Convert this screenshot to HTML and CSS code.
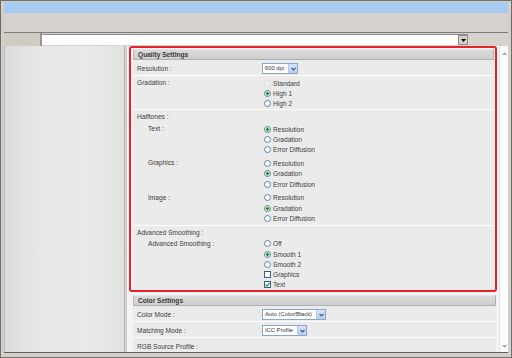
FILE: index.html
```html
<!DOCTYPE html>
<html>
<head>
<meta charset="utf-8">
<link rel="stylesheet" href="styles.css">
</head>
<body>
<div class="window">
  <div class="titlebar"></div>
  <div class="toolbar"></div>
  <div class="addressbar">
    <div class="addr-label"></div>
    <div class="addr-input">
      <span class="addr-drop"><svg width="5" height="3" viewBox="0 0 5 3"><path d="M0 0h5L2.5 3z" fill="#000"/></svg></span>
    </div>
    <div class="addr-rest"></div>
  </div>
  <div class="content">
    <div class="sidebar"></div>
    <div class="divider"></div>
    <div class="main">
      <div class="highlight">
        <section class="panel">
          <div class="panel-head">Quality Settings</div>
          <div class="row row-select">
            <div class="label">Resolution :</div>
            <div class="ctrl"><span class="select">600 dpi<span class="sel-btn"><svg width="5" height="4" viewBox="0 0 5 4"><path d="M0.5 0.8L2.5 2.8L4.5 0.8" fill="none" stroke="#3f5478" stroke-width="1.2"/></svg></span></span></div>
          </div>
          <div class="row row-radios">
            <div class="label">Gradation :</div>
            <div class="ctrl opts">
              <div class="opt"><span class="radio disabled"></span>Standard</div>
              <div class="opt"><span class="radio on"></span>High 1</div>
              <div class="opt"><span class="radio"></span>High 2</div>
            </div>
          </div>
          <div class="row row-group">
            <div class="label full">Halftones :</div>
            <div class="sub">
              <div class="label sublabel">Text :</div>
              <div class="ctrl opts">
                <div class="opt"><span class="radio on"></span>Resolution</div>
                <div class="opt"><span class="radio"></span>Gradation</div>
                <div class="opt"><span class="radio"></span>Error Diffusion</div>
              </div>
            </div>
            <div class="sub">
              <div class="label sublabel">Graphics :</div>
              <div class="ctrl opts">
                <div class="opt"><span class="radio"></span>Resolution</div>
                <div class="opt"><span class="radio on"></span>Gradation</div>
                <div class="opt"><span class="radio"></span>Error Diffusion</div>
              </div>
            </div>
            <div class="sub">
              <div class="label sublabel">Image :</div>
              <div class="ctrl opts">
                <div class="opt"><span class="radio"></span>Resolution</div>
                <div class="opt"><span class="radio on"></span>Gradation</div>
                <div class="opt"><span class="radio"></span>Error Diffusion</div>
              </div>
            </div>
          </div>
          <div class="row row-group row-last">
            <div class="label full">Advanced Smoothing :</div>
            <div class="sub">
              <div class="label sublabel">Advanced Smoothing :</div>
              <div class="ctrl opts">
                <div class="opt"><span class="radio"></span>Off</div>
                <div class="opt"><span class="radio on"></span>Smooth 1</div>
                <div class="opt"><span class="radio"></span>Smooth 2</div>
                <div class="opt"><span class="check"></span>Graphics</div>
                <div class="opt"><span class="check on"><svg width="7" height="7" viewBox="0 0 7 7"><path d="M1.5 3.6L2.9 5L5.6 1.8" fill="none" stroke="#23a023" stroke-width="1.2"/></svg></span>Text</div>
              </div>
            </div>
          </div>
        </section>
      </div>
      <section class="panel panel-plain">
        <div class="panel-head">Color Settings</div>
        <div class="row row-select">
          <div class="label">Color Mode :</div>
          <div class="ctrl"><span class="select">Auto (Color/Black)<span class="sel-btn"><svg width="5" height="4" viewBox="0 0 5 4"><path d="M0.5 0.8L2.5 2.8L4.5 0.8" fill="none" stroke="#3f5478" stroke-width="1.2"/></svg></span></span></div>
        </div>
        <div class="row row-select">
          <div class="label">Matching Mode :</div>
          <div class="ctrl"><span class="select">ICC Profile<span class="sel-btn"><svg width="5" height="4" viewBox="0 0 5 4"><path d="M0.5 0.8L2.5 2.8L4.5 0.8" fill="none" stroke="#3f5478" stroke-width="1.2"/></svg></span></span></div>
        </div>
        <div class="row row-select">
          <div class="label">RGB Source Profile :</div>
        </div>
      </section>
    </div>
    <div class="scrollbar">
      <svg class="arrow" width="5" height="3" viewBox="0 0 5 3"><path d="M0 3L2.5 0L5 3z" fill="#a8a8a8"/></svg>
      <svg class="arrow" width="5" height="3" viewBox="0 0 5 3"><path d="M0 0L2.5 3L5 0z" fill="#a8a8a8"/></svg>
    </div>
  </div>
  <div class="statusbar"></div>
</div>
</body>
</html>
```

FILE: styles.css
```css
html, body {
  margin: 0;
  padding: 0;
}
body {
  width: 512px;
  height: 358px;
  overflow: hidden;
  font-family: "Liberation Sans", Arial, sans-serif;
  font-size: 6.6px;
  color: #3c3c3c;
}
.window {
  box-sizing: border-box;
  width: 512px;
  height: 358px;
  border: 1px solid #6e6e6e;
  background: #d4d0c8;
  padding: 1px 3px 0 3px;
  display: flex;
  flex-direction: column;
}
.titlebar {
  height: 11px;
  background: #a8c9f1;
  flex: none;
}
.toolbar {
  height: 19px;
  background: #d6d3ce;
  flex: none;
}
.addressbar {
  height: 13px;
  border-top: 1px solid #7c7c7c;
  display: flex;
  flex: none;
  background: #d6d3ce;
}
.addr-label {
  width: 36px;
  border-right: 2px solid #9a978f;
  background: #d0ccc4;
}
.addr-input {
  width: 426px;
  margin-top: 1px;
  height: 11px;
  background: #fff;
  border-top: 1px solid #8a8a8a;
  box-sizing: border-box;
  display: flex;
  justify-content: flex-end;
}
.addr-drop {
  width: 10px;
  height: 10px;
  background: #d4d0c8;
  border: 1px solid #8e8e8e;
  box-sizing: border-box;
  display: flex;
  align-items: center;
  justify-content: center;
}
.addr-rest {
  flex: 1;
}
.content {
  height: 306px;
  display: flex;
  flex: none;
}
.sidebar {
  width: 119px;
  border-left: 1px solid #b9b9b9;
  background: linear-gradient(to right, #dcdcdc, #e7e7e7 30%, #eaeaea 70%, #e2e2e2);
}
.divider {
  width: 3px;
  border-left: 1px solid #b4b4b4;
  background: #d4d0c8;
  box-sizing: border-box;
}
.main {
  width: 372px;
  background: #f3f3f3;
  padding-left: 2px;
  box-sizing: border-box;
  overflow: hidden;
}
.highlight {
  border: 2px solid #e4212d;
  border-radius: 3px;
  padding: 1px 1px 0 2px;
  width: 368px;
  box-sizing: border-box;
}
.panel-plain {
  margin: 3px 3px 0 4px;
}
.panel-head {
  height: 11px;
  box-sizing: border-box;
  background: linear-gradient(#dadada, #cfcfcf);
  border: 1px solid #b0b0b0;
  border-top-color: #e6e6e6;
  border-left-color: #bdbdbd;
  font-weight: bold;
  line-height: 9px;
  padding-left: 4px;
  color: #3a3a3a;
}
.row {
  display: grid;
  grid-template-columns: 125px 1fr;
  padding: 1px 0 1px 4px;
  background: #ebebeb;
  border-bottom: 1px solid #ffffff;
}
.row-radios {
  padding: 2px 0 0 4px;
}
.row-select {
  padding: 3px 0 1px 4px;
  height: 11px;
}
.row-select .label {
  line-height: 11px;
}
.label {
  line-height: 10px;
  white-space: nowrap;
}
.row-group {
  display: block;
  padding: 2px 0 1px 4px;
}
.row-last {
  border-bottom: none;
  padding: 2px 0 0 4px;
}
.full {
  margin-bottom: 2px;
}
.row-last .full {
  margin-bottom: 1px;
}
.sub {
  display: grid;
  grid-template-columns: 125px 1fr;
  margin-bottom: 3.5px;
}
.sub:last-child {
  margin-bottom: 0;
}
.sublabel {
  padding-left: 11px;
}
.opts {
  display: flex;
  flex-direction: column;
  padding-left: 2px;
}
.opt {
  height: 10.3px;
  display: flex;
  align-items: center;
  white-space: nowrap;
}
.radio {
  width: 7px;
  height: 7px;
  box-sizing: border-box;
  border: 1px solid #5b7eab;
  border-radius: 50%;
  background: #fff;
  margin-right: 2px;
  flex: none;
}
.radio.on {
  border-color: #5a86a8;
  background: radial-gradient(circle, #1f7a2a 0 1.1px, #a7dca8 1.3px 2.1px, #ffffff 2.3px);
}
.radio.disabled {
  border-color: #d9d9d9;
  background: #f2f2f2;
}
.check {
  width: 7px;
  height: 7px;
  box-sizing: border-box;
  border: 1px solid #3c5e8f;
  background: #fff;
  margin-right: 2px;
  flex: none;
  display: flex;
  align-items: center;
  justify-content: center;
}
.check svg {
  margin: -1px;
  flex: none;
}
.select {
  display: inline-flex;
  align-items: center;
  height: 11px;
  box-sizing: border-box;
  border: 1px solid #8ea6c6;
  background: #fff;
  padding-left: 2px;
  color: #333;
  white-space: nowrap;
  line-height: 9px;
  font-size: 5.8px;
}
.sel-btn {
  width: 8px;
  height: 9px;
  margin-left: 4px;
  background: linear-gradient(#d8e5fa, #b9cdf0);
  border-left: 1px solid #b4c8e8;
  display: flex;
  align-items: center;
  justify-content: center;
}
.scrollbar {
  width: 9px;
  box-sizing: border-box;
  border-left: 1px solid #e2e2e2;
  background: #fbfbfb;
  display: flex;
  flex-direction: column;
  align-items: center;
  justify-content: space-between;
  padding: 6px 0 4px;
}
.statusbar {
  flex: 1;
  border-top: 1px solid #5f5f5f;
  background: #d4d0c8;
}
```
